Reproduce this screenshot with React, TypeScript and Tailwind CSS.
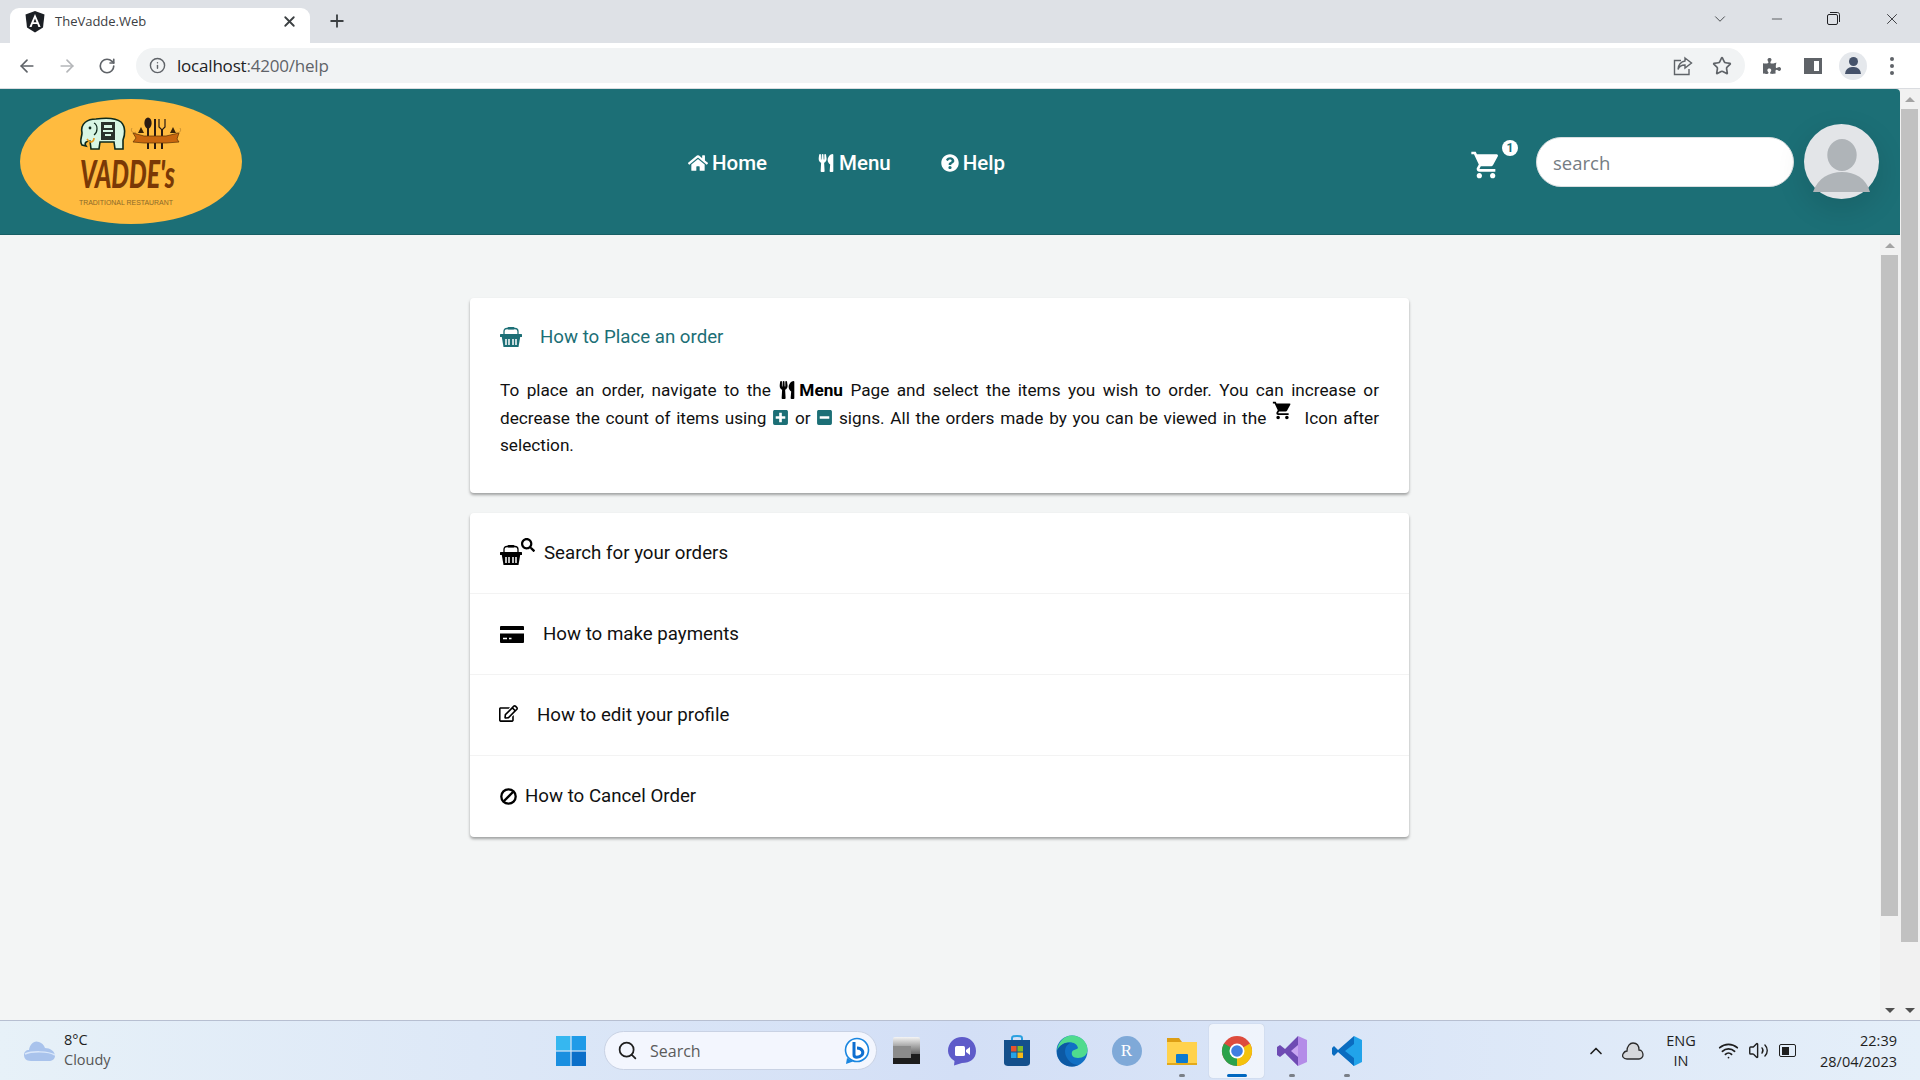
import { ArrowLeft, ArrowRight, RotateCw, Info, Star, X, Plus, ChevronDown, Minus, Search, ChevronUp, Wifi, Volume2 } from "lucide-react";
import { FaHome, FaUtensils, FaQuestionCircle, FaSearch, FaRegEdit, FaPlusSquare, FaMinusSquare, FaPuzzlePiece } from "react-icons/fa";
import { MdShoppingCart } from "react-icons/md";

function AngularIcon() {
  return (
    <svg width="20" height="22" viewBox="0 0 20 22">
      <path d="M10 0 L19.5 3.4 L18 16.5 L10 21.5 L2 16.5 L.5 3.4 Z" fill="#1b1f24" />
      <path d="M10 3 L4.4 16 H6.6 L7.7 13 H12.3 L13.4 16 H15.6 Z M8.5 11.2 L10 7.5 L11.5 11.2 Z" fill="#fff" fillRule="evenodd" />
    </svg>
  );
}

function ShareIcon() {
  return (
    <svg width="20" height="20" viewBox="0 0 20 20" fill="none" stroke="#5f6368" strokeWidth="1.4">
      <path d="M8 4.5 H1.5 V18.5 H16 V13" />
      <path d="M12 2 L18.5 7 L12 12 V9 C8.5 9 6 10.5 5 13.5 C5 9 8 5.5 12 5 Z" />
    </svg>
  );
}

function BasketIcon({ className }: { className?: string }) {
  return (
    <svg width="22" height="20" viewBox="0 0 22 20" className={className}>
      <path d="M4 8 V4.500 C4 2.500 5 1.500 7 1.500 H15 C17 1.500 18 2.500 18 4.500 V8" fill="none" stroke="currentColor" strokeWidth="1.300" />
      <rect x="7.500" y="0" width="7" height="2.500" rx="1" fill="currentColor" />
      <rect x="0" y="7" width="22" height="3" rx=".5" fill="currentColor" />
      <path d="M1.800 10 H20.200 L18.500 20 H3.500 Z" fill="currentColor" />
      <path d="M6 12 V18 M9 12 V18 M13 12 V18 M16 12 V18" stroke="#fff" strokeWidth="1.500" />
    </svg>
  );
}

function CardIcon() {
  return (
    <svg width="24" height="17" viewBox="0 0 24 17">
      <path d="M1 0 H23 A1 1 0 0 1 24 1 V4 H0 V1 A1 1 0 0 1 1 0 Z" fill="#000" />
      <path d="M0 7.500 H24 V16 A1 1 0 0 1 23 17 H1 A1 1 0 0 1 0 16 Z" fill="#000" />
      <path d="M3 12.500 H7 M9 12.500 H11.500" stroke="#fff" strokeWidth="1.500" />
    </svg>
  );
}

function BanIcon() {
  return (
    <svg width="17" height="17" viewBox="0 0 17 17" fill="none" stroke="#000" strokeWidth="2.300">
      <circle cx="8.500" cy="8.500" r="7.200" />
      <path d="M4 13 L13 4" />
    </svg>
  );
}

function Logo() {
  return (
    <svg width="222" height="125" viewBox="0 0 222 125" className="shrink-0">
      <ellipse cx="111" cy="62.5" rx="111" ry="62.5" fill="#ffbb3f" />
      {/* elephant */}
      <path d="M62 34 C60 24 68 20 76 20 C84 19 96 19 101 23 C106 28 105 36 103 41 L103 50 H95 L94 43 H80 L79 50 H71 L70 42 C66 42 64 44 66 47 L62 46 C59 42 62 38 62 34 Z" fill="#d8f6e4" stroke="#0e2a1c" strokeWidth="1.6" />
      <rect x="81" y="23" width="14" height="18" fill="#29312b" />
      <rect x="84" y="26" width="8" height="3" fill="#d8f6e4" />
      <rect x="83" y="31" width="10" height="2" fill="#d8f6e4" />
      <rect x="85" y="35" width="6" height="2" fill="#d8f6e4" />
      <circle cx="70" cy="29" r="1.4" fill="#0e2a1c" />
      <path d="M74 24 C78 26 78 33 74 36" fill="none" stroke="#0e2a1c" strokeWidth="1.2" />
      <path d="M67 40 C70 45 74 43 74 39" fill="none" stroke="#e59a1c" strokeWidth="1.6" />
      {/* cutlery and ribbon */}
      <ellipse cx="128" cy="24" rx="3.6" ry="5.5" fill="#2a1a12" />
      <path d="M128 28 V50 M135 20 V50 M142 31 V50" stroke="#2a1a12" strokeWidth="2" />
      <path d="M139 20 V28 L142 31 L145 28 V20" fill="none" stroke="#2a1a12" strokeWidth="1.2" />
      <path d="M113 34 L124 37 H146 L159 34 L157 40 L159 43 L146 44 L124 44 L113 43 L116 39 Z" fill="#c9670f" stroke="#5a3005" strokeWidth=".7" />
      <path d="M118 34 L121 28 L124 34 M150 34 L153 28 L156 34" fill="#3a2408" />
      <path d="M112 29 C110 32 113 35 116 33 M160 29 C162 32 159 35 156 33" fill="none" stroke="#b9812a" strokeWidth=".7" />
      {/* wordmark */}
      <text x="60" y="89" textLength="95" lengthAdjust="spacingAndGlyphs" fill="#7a3906" className="font-['Lato',sans-serif] text-[37px] font-black italic">
        VADDE's
      </text>
      <text x="59" y="105.5" textLength="94" lengthAdjust="spacingAndGlyphs" fill="#8c6a2a" className="font-['Liberation_Sans',sans-serif] text-[7px]">
        TRADITIONAL RESTAURANT
      </text>
    </svg>
  );
}

function Avatar() {
  return (
    <svg width="75" height="75" viewBox="0 0 75 75" className="shrink-0">
      <circle cx="37.5" cy="37.5" r="37.5" fill="#e3e5e8" />
      <ellipse cx="38" cy="31" rx="14.7" ry="16" fill="#afb4b8" />
      <path d="M9 68 C14 54 25 48 38 48 C51 48 62 54 66 68 Z" fill="#afb4b8" />
    </svg>
  );
}

function ScrollBar({ thumbTop }: { thumbTop: string }) {
  return (
    <div className="w-[20px] shrink-0 bg-[#f1f1f1] flex flex-col items-center">
      <div className="h-[20px] w-full flex items-center justify-center shrink-0">
        <div className="w-0 h-0 border-x-[5px] border-x-transparent border-b-[5px] border-b-[#a3a3a3]" />
      </div>
      <div className={`w-[17px] mr-[1px] bg-[#c1c1c1] ${thumbTop}`} />
      <div className="w-full flex-1" />
      <div className="h-[20px] w-full flex items-center justify-center shrink-0">
        <div className="w-0 h-0 border-x-[5px] border-x-transparent border-t-[5px] border-t-[#505050]" />
      </div>
    </div>
  );
}

function BrowserChrome() {
  return (
    <div className="shrink-0 font-['Open_Sans',sans-serif]">
      <div className="h-[43px] bg-[#dee1e6] flex items-end pl-[10px] relative">
        <div className="w-[300px] h-[35px] bg-white rounded-t-[9px] flex items-center pl-[15px] pr-[12px] pb-[8px]">
          <AngularIcon />
          <span className="ml-[10px] text-[13px] text-[#3c4043]">TheVadde.Web</span>
          <X size={17} strokeWidth={2.6} className="ml-auto text-[#3c4043]" />
        </div>
        <Plus size={20} strokeWidth={2.2} className="ml-[17px] mb-[12px] text-[#3c4043]" />
        <div className="ml-auto h-full flex items-center pb-[6px] text-[#3c4043]">
          <ChevronDown size={18} strokeWidth={1.2} className="mr-[40px]" />
          <Minus size={16} strokeWidth={1.2} className="mr-[42px]" />
          <svg width="13" height="13" viewBox="0 0 13 13" fill="none" stroke="#202124" strokeWidth="1" className="mr-[43px]">
            <rect x=".5" y="2.5" width="10" height="10" rx="1.5" />
            <path d="M3 .5 H10.5 C11.6 .5 12.5 1.4 12.5 2.5 V10" />
          </svg>
          <X size={18} strokeWidth={1.1} className="mr-[19px] text-[#202124]" />
        </div>
      </div>
      <div className="h-[46px] bg-white border-b border-[#dadce0] flex items-center">
        <div className="w-[136px] flex items-center pl-[17px] gap-[20px] shrink-0">
          <ArrowLeft size={20} strokeWidth={2} className="text-[#5f6368]" />
          <ArrowRight size={20} strokeWidth={2} className="text-[#b4b6b9]" />
          <RotateCw size={18} strokeWidth={2.2} className="text-[#5f6368] ml-[1px]" />
        </div>
        <div className="w-[1609px] h-[35px] rounded-full bg-[#f1f3f4] flex items-center pl-[13px] pr-[13px]">
          <Info size={17} strokeWidth={2} className="text-[#5f6368]" />
          <span className="ml-[11px] text-[17px] tracking-[-0.2px] text-[#202124]">
            localhost<span className="text-[#5f6368]">:4200/help</span>
          </span>
          <div className="ml-auto flex items-center gap-[19px]">
            <ShareIcon />
            <Star size={20} strokeWidth={2} className="text-[#5f6368]" />
          </div>
        </div>
        <div className="flex items-center ml-[18px]">
          <FaPuzzlePiece size={18} className="text-[#5f6368]" />
          <div className="ml-[23px] w-[18px] h-[16px] border-[3px] border-[#5f6368] border-l-[10px] bg-white" />
          <div className="ml-[17px] w-[28px] h-[28px] rounded-full bg-[#e5e8ec] flex flex-col items-center justify-center">
            <div className="w-[9px] h-[9px] rounded-full bg-[#45526a]" />
            <div className="w-[16px] h-[7px] rounded-t-full bg-[#45526a] mt-[1px]" />
          </div>
          <div className="ml-[23px] flex flex-col gap-[3px]">
            <div className="w-[4px] h-[4px] rounded-full bg-[#5f6368]" />
            <div className="w-[4px] h-[4px] rounded-full bg-[#5f6368]" />
            <div className="w-[4px] h-[4px] rounded-full bg-[#5f6368]" />
          </div>
        </div>
      </div>
    </div>
  );
}

function NavLink({ icon, label, className }: { icon: React.ReactNode; label: string; className?: string }) {
  return (
    <a className={`flex items-center gap-[4px] text-white text-[20.5px] font-medium ${className ?? ""}`}>
      {icon}
      {label}
    </a>
  );
}

function Header() {
  return (
    <header className="h-[146px] shrink-0 bg-[#1c6f76] rounded-tr-[4px] flex items-center pl-[20px] pr-[21px] font-['Roboto',sans-serif] border-b border-[#175f65]">
      <Logo />
      <nav className="flex items-center ml-[446px] mt-[3px]">
        <NavLink icon={<FaHome size={20} />} label="Home" />
        <NavLink icon={<FaUtensils size={18} />} label="Menu" className="ml-[50px]" />
        <NavLink icon={<FaQuestionCircle size={18} />} label="Help" className="ml-[50px]" />
      </nav>
      <div className="ml-auto flex items-center">
        <div className="relative w-[36px] h-[36px] mr-[30px]">
          <MdShoppingCart size={32} className="text-white absolute left-0 top-[5px]" />
          <span className="absolute left-[32px] -top-[4px] w-[16px] h-[16px] rounded-full bg-white text-[#1c6f76] text-[12px] font-bold flex items-center justify-center leading-none">1</span>
        </div>
        <div className="w-[258px] h-[50px] rounded-full bg-white flex items-center pl-[16px] pt-[2px] text-[18.5px] font-['Open_Sans',sans-serif] text-[#757c83] border border-[#d9dee0]">search</div>
        <div className="ml-[10px] rounded-full shadow-[0_10px_30px_rgba(0,0,0,0.12)]">
          <Avatar />
        </div>
      </div>
    </header>
  );
}

function ListRow({ icon, label, gap, last }: { icon: React.ReactNode; label: string; gap: string; last?: boolean }) {
  return (
    <div className={`h-[81px] flex items-center pl-[30px] text-[18.7px] text-[#111] ${last ? "" : "border-b border-[#f3f3f3]"}`}>
      {icon}
      <span className={gap}>{label}</span>
    </div>
  );
}

function HelpContent() {
  return (
    <div className="flex-1 pt-[63px] pl-[470px] font-['Roboto',sans-serif]">
      <div className="w-[939px] flex flex-col gap-[20px]">
        <section className="h-[195px] bg-white rounded-[4px] shadow-[0_2px_3px_rgba(0,0,0,0.35)] pt-[27px] px-[30px]">
          <div className="flex items-center h-[24px] text-[18.7px] text-[#1c6f76]">
            <BasketIcon />
            <span className="ml-[18px]">How to Place an order</span>
          </div>
          <p className="mt-[28px] text-[17.2px] leading-[27.5px] text-justify text-[#111]">
            To place an order, navigate to the <FaUtensils size={18} className="inline align-[-3px] text-black mr-[3px]" />
            <b className="font-bold text-black">Menu</b> Page and select the items you wish to order. You can increase or decrease the count of items using{" "}
            <FaPlusSquare size={17} className="inline align-[-2px] text-[#1c6f76]" /> or{" "}
            <FaMinusSquare size={17} className="inline align-[-2px] text-[#1c6f76]" /> signs. All the orders made by you can be viewed in the{" "}
            <MdShoppingCart size={21} className="inline align-[-3px] -translate-y-[6px] text-black" />&nbsp; Icon after selection.
          </p>
        </section>
        <section className="bg-white rounded-[4px] shadow-[0_2px_3px_rgba(0,0,0,0.35)]">
          <ListRow
            gap="ml-[8px]"
            label="Search for your orders"
            icon={
              <span className="relative w-[36px] h-[24px] shrink-0 text-black">
                <BasketIcon className="absolute left-0 top-[4px]" />
                <FaSearch size={14} className="absolute left-[21px] -top-[3px]" />
              </span>
            }
          />
          <ListRow gap="ml-[19px]" label="How to make payments" icon={<CardIcon />} />
          <ListRow gap="ml-[19px]" label="How to edit your profile" icon={<FaRegEdit size={19} className="text-black -mt-[4px] -ml-[1px]" />} />
          <ListRow gap="ml-[8px]" label="How to Cancel Order" last icon={<BanIcon />} />
        </section>
      </div>
    </div>
  );
}

function TaskIcon({ children, active, dot }: { children: React.ReactNode; active?: boolean; dot?: boolean }) {
  return (
    <div className={`relative w-[55px] h-[54px] shrink-0 flex items-center justify-center rounded-[4px] ${active ? "bg-white/60 shadow-[0_0_1px_rgba(0,0,0,0.25)]" : ""}`}>
      {children}
      {dot && <span className="absolute bottom-[1px] w-[6px] h-[3px] rounded-full bg-[#7a7f87]" />}
      {active && <span className="absolute bottom-[1px] w-[20px] h-[3px] rounded-full bg-[#0067c0]" />}
    </div>
  );
}

function Taskbar() {
  return (
    <footer className="h-[60px] shrink-0 border-t border-[#b7bfd1] bg-gradient-to-r from-[#e7f1f8] via-[#d3dff6] to-[#e5eff9] flex items-center font-['Open_Sans',sans-serif]">
      <div className="w-[546px] pl-[24px] flex items-center shrink-0">
        <svg width="32" height="24" viewBox="0 0 32 24">
          <path d="M7 22 C2 22 0 19 0 16 C0 13 2 11 5 11 C6 5 10 1 15 3 C18 4 20 6 21 9 C26 9 31 12 31 17 C31 20 28 22 25 22 Z" fill="#a9c3ec" />
          <path d="M1 15 C8 12 24 12 31 16" fill="none" stroke="#dbe8fa" strokeWidth="1.5" />
        </svg>
        <div className="ml-[8px] -mt-[2px] text-[14.5px] leading-[20px]">
          <div className="text-[#1f1f1f]">8°C</div>
          <div className="text-[#555]">Cloudy</div>
        </div>
      </div>
      <div className="w-[50px] flex items-center justify-center shrink-0">
        <svg width="30" height="30" viewBox="0 0 30 30">
          <rect x="0" y="0" width="14.4" height="14.4" fill="#36b7f0" />
          <rect x="15.6" y="0" width="14.4" height="14.4" fill="#1f9be8" />
          <rect x="0" y="15.6" width="14.4" height="14.4" fill="#1a8fe0" />
          <rect x="15.6" y="15.6" width="14.4" height="14.4" fill="#0b6fc9" />
        </svg>
      </div>
      <div className="ml-[8px] w-[273px] h-[39px] rounded-full bg-[#f3f6fe] border border-[#c9d2e4] flex items-center pl-[12px] pr-[6px] shrink-0">
        <Search size={21} strokeWidth={2} className="text-[#1f1f1f]" />
        <span className="ml-[12px] text-[16px] text-[#5b5b5b]">Search</span>
        <svg width="26" height="30" viewBox="0 0 26 30" className="ml-auto">
          <circle cx="13" cy="14" r="11.5" fill="#fff" stroke="#1a86e0" strokeWidth="1.6" />
          <path d="M10 6 V19 C10 22 15 22 18 19 C20 16 18 12 13 12" fill="none" stroke="#0f6fd0" strokeWidth="3" />
          <path d="M3 22 L2 28 L9 25.5" fill="#1a86e0" />
        </svg>
      </div>
      <div className="ml-[2px] flex items-center shrink-0">
        <TaskIcon>
          <div className="w-[27px] h-[27px] rounded-[2px] bg-gradient-to-b from-[#f5f5f5] to-[#222] relative">
            <div className="absolute inset-x-0 bottom-0 h-[10px] bg-[#1d1d1d]" />
            <div className="absolute left-0 top-[9px] w-[18px] h-[12px] bg-[#8b8b8b]" />
          </div>
        </TaskIcon>
        <TaskIcon>
          <svg width="30" height="30" viewBox="0 0 30 30">
            <path d="M15 1 C23 1 29 7 29 15 C29 23 23 27 15 27 L7 29.5 L7.5 25 C3 22 1 18.500 1 15 C1 7 7 1 15 1 Z" fill="#5e5bc9" />
            <rect x="8" y="10" width="10" height="10" rx="1.5" fill="#fff" />
            <path d="M19 14 L23 11 V19 L19 16 Z" fill="#fff" />
          </svg>
        </TaskIcon>
        <TaskIcon>
          <svg width="28" height="32" viewBox="0 0 28 32">
            <path d="M9 6 V3 C9 1 11 1 14 1 C17 1 19 1 19 3 V6" fill="none" stroke="#2aa0e0" strokeWidth="2" />
            <path d="M1 5 H27 V28 C27 30 25 31 23 31 H5 C3 31 1 30 1 28 Z" fill="#14508c" />
            <rect x="8" y="11" width="5.500" height="5.500" fill="#e8532b" />
            <rect x="14.500" y="11" width="5.500" height="5.500" fill="#7fba2a" />
            <rect x="8" y="17.500" width="5.500" height="5.500" fill="#27a3e6" />
            <rect x="14.500" y="17.500" width="5.500" height="5.500" fill="#f9b916" />
          </svg>
        </TaskIcon>
        <TaskIcon>
          <svg width="32" height="32" viewBox="0 0 32 32">
            <circle cx="16" cy="16" r="15.500" fill="#1170c4" />
            <path d="M16 .5 C25 .5 31.500 7 31.500 15 C31.500 20 27 23 22 23 C17 23 15 20 16 17 C17 14 21 15 22 13 C21 8 15 6 9 8 C5 10 2 13 1 16 C2 7 8 .5 16 .5 Z" fill="#4fdb8e" />
            <path d="M1 16 C3 10 9 7 14 8 C9 11 8 16 10 21 C12 26 17 30 22 30 C20 31 18 31.500 16 31.500 C7 31.500 .5 25 1 16 Z" fill="#0c59a4" />
          </svg>
        </TaskIcon>
        <TaskIcon>
          <div className="w-[30px] h-[30px] rounded-full bg-[#7fa9d8] flex items-center justify-center text-white text-[17px] font-['Liberation_Serif',serif]">R</div>
        </TaskIcon>
        <TaskIcon dot>
          <svg width="32" height="32" viewBox="0 0 32 32">
            <path d="M1 3 H13 L16 7 H31 V12 H1 Z" fill="#dd9e14" />
            <rect x="1" y="7" width="30" height="23" fill="#ffd24d" />
            <rect x="10" y="19" width="12" height="9" rx="1" fill="#0b7ad1" />
            <rect x="1" y="28" width="30" height="2" fill="#e2a91b" />
          </svg>
        </TaskIcon>
        <TaskIcon active>
          <svg width="32" height="32" viewBox="0 0 32 32">
            <circle cx="16" cy="16" r="15" fill="#dd4b3d" />
            <path d="M16 16 L29 8.500 A15 15 0 0 1 16 31 Z" fill="#f4c20d" />
            <path d="M16 16 L16 31 A15 15 0 0 1 3 8.500 Z" fill="#2aa24b" />
            <circle cx="16" cy="16" r="7.500" fill="#fff" />
            <circle cx="16" cy="16" r="5.800" fill="#3f7fe0" />
          </svg>
        </TaskIcon>
        <TaskIcon dot>
          <svg width="32" height="32" viewBox="0 0 32 32">
            <path d="M22 1 L31 5 V27 L22 31 L10 19 L22 13 Z" fill="#b48ce8" />
            <path d="M22 1 L9 14 L4 10 L1 12 V20 L4 22 L9 18 L22 31 Z" fill="#6e4bb3" />
            <path d="M22 10 L15 16 L22 22 Z" fill="#c9a6f2" />
          </svg>
        </TaskIcon>
        <TaskIcon dot>
          <svg width="32" height="32" viewBox="0 0 32 32">
            <path d="M23 1 L31 5 V27 L23 31 L8 17 L23 8 Z" fill="#21a3ea" />
            <path d="M23 1 L7 15 L3 11 L1 13 V19 L3 21 L7 17 L23 31 V23 L14 16 L23 9 Z" fill="#0a6cc0" />
          </svg>
        </TaskIcon>
      </div>
      <div className="ml-auto flex items-center text-[#1f1f1f] pr-[23px]">
        <ChevronUp size={20} strokeWidth={2} className="-mr-[1px]" />
        <svg width="22" height="18" viewBox="0 0 22 18" className="ml-[17px]">
          <path d="M5 17 C1 17 0 14 1 12 C2 10 3 9 5 9 C5 4 8 1 11 1 C15 1 17 4 17 8 C20 8 21 11 21 13 C21 15 19 17 17 17 Z" fill="#d6d8dc" stroke="#2b2b2b" strokeWidth="1.300" />
        </svg>
        <div className="ml-[17px] w-[40px] text-center text-[14.5px] leading-[20px]">
          <div>ENG</div>
          <div>IN</div>
        </div>
        <Wifi size={21} strokeWidth={2} className="ml-[17px]" />
        <Volume2 size={21} strokeWidth={1.6} className="ml-[9px]" />
        <div className="ml-[10px] w-[17px] h-[13px] border-[1.5px] border-[#1f1f1f] rounded-[2px] p-[1.5px] flex">
          <div className="w-[7px] bg-[#1f1f1f]" />
        </div>
        <div className="ml-[21px] text-right text-[14.5px] leading-[21px] w-[80px]">
          <div>22:39</div>
          <div>28/04/2023</div>
        </div>
      </div>
    </footer>
  );
}

export default function App() {
  return (
    <div className="w-[1920px] h-[1080px] overflow-hidden flex flex-col bg-[#f3f5f5]">
      <BrowserChrome />
      <div className="flex-1 min-h-0 flex">
        <div className="flex-1 min-w-0 flex flex-col">
          <Header />
          <div className="flex-1 min-h-0 flex">
            <HelpContent />
            <ScrollBar thumbTop="h-[661px]" />
          </div>
        </div>
        <ScrollBar thumbTop="h-[833px]" />
      </div>
      <Taskbar />
    </div>
  );
}
